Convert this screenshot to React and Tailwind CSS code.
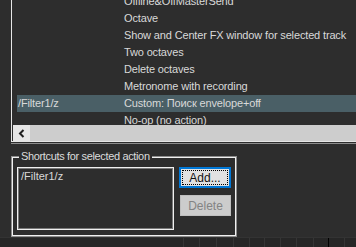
import React from 'react';

const rows = [
  { key: '', name: 'Offline&OffMasterSend' },
  { key: '', name: 'Octave' },
  { key: '', name: 'Show and Center FX window for selected track' },
  { key: '', name: 'Two octaves' },
  { key: '', name: 'Delete octaves' },
  { key: '', name: 'Metronome with recording' },
  { key: '/Filter1/z', name: 'Custom: Поиск envelope+off', selected: true },
  { key: '', name: 'No-op (no action)' },
];

const gridLines = [183, 199, 216, 233, 249, 264, 280, 296, 313, 328, 344];

const App = () => {
  return (
    <div
      className="w-[356px] h-[247px] bg-[#2d2d2d] text-[#d9d9d9] text-[11px] leading-[17px] overflow-hidden flex flex-col"
      style={{ fontFamily: '"Liberation Sans", Arial, sans-serif' }}
    >
      {/* Action list */}
      <div className="ml-[11px] border-l border-b border-[#e6e6e6] flex flex-col">
        <div className="h-[125px] overflow-hidden">
          <div className="-mt-[7px] tracking-[-0.15px]">
            {rows.map((row, idx) => (
              <div
                key={idx}
                className={`ml-[5px] h-[17px] flex items-center whitespace-nowrap ${row.selected ? 'bg-[#4a5f66]' : ''}`}
              >
                <span className="w-[107px] pl-[1px] shrink-0">{row.key}</span>
                <span>{row.name}</span>
              </div>
            ))}
          </div>
        </div>
        {/* Horizontal scrollbar */}
        <div className="h-[16px] ml-[1px] flex bg-[#cdcdcd]">
          <div className="w-[17px] h-full bg-[#e6e6e6] flex items-center justify-center">
            <svg width="8" height="9" viewBox="0 0 8 9">
              <path d="M5.5 1 L2 4.5 L5.5 8" fill="none" stroke="#202020" strokeWidth="2" />
            </svg>
          </div>
        </div>
      </div>
      <div className="mt-[1px] ml-[11px] h-px bg-[#8c8c8c]" />

      {/* Shortcuts group */}
      <div className="relative mt-[12px] ml-[11px] w-[226px] h-[81px] border border-[#8c8c8c]">
        <div className="absolute inset-0 border border-[#f0f0f0]" />
        <span className="absolute -top-[9px] left-[7px] px-[2px] bg-[#2d2d2d] leading-[16px] text-[#dcdcdc] tracking-[-0.35px]">
          Shortcuts for selected action
        </span>
        <div className="flex pt-[10px] pl-[5px]">
          <div className="w-[157px] h-[63px] border border-[#f0f0f0]">
            <div className="w-full h-full border border-[#7a7a7a] pl-[2px] leading-[15px]">/Filter1/z</div>
          </div>
          <div className="ml-[5px] flex flex-col gap-[7px]">
            <button className="w-[52px] h-[21px] border-2 border-[#0078d7] bg-[#e1e1e1] p-px">
              <div className="w-full h-full border border-dotted border-black flex items-center justify-center text-[#111] leading-none text-[12px]">
                Add...
              </div>
            </button>
            <button className="ml-[1px] w-[51px] h-[21px] border border-[#bfbfbf] bg-[#cccccc] text-[#838383] flex items-center justify-center leading-none text-[12px]">
              Delete
            </button>
          </div>
        </div>
      </div>

      {/* Bottom strip */}
      <div className="flex-1 bg-[#262626] border-t border-[#333] relative">
        {gridLines.map((x) => (
          <div
            key={x}
            className={`absolute top-0 bottom-0 w-px ${x === 328 ? 'bg-black' : 'bg-[#353535]'}`}
            style={{ left: x }}
          />
        ))}
      </div>
    </div>
  );
};

export default App;
